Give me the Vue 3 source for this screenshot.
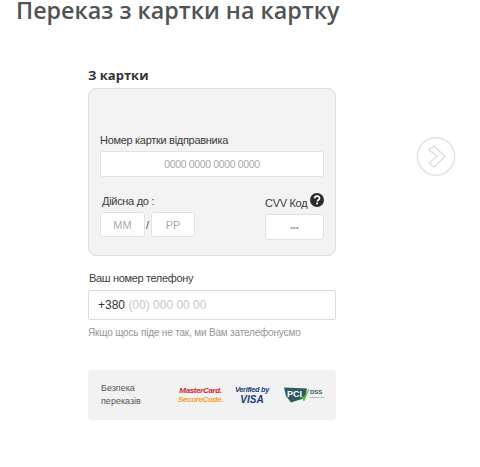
<script setup>
const title = 'Переказ з картки на картку';
</script>

<template>
  <div class="page">
    <h1 class="title">{{ title }}</h1>
    <div class="row">
      <div class="form">
        <h2 class="from">З картки</h2>
        <div class="panel">
          <label class="label">Номер картки відправника</label>
          <div class="box number">0000 0000 0000 0000</div>
          <div class="bottom">
            <div class="expiry">
              <label class="label expiry-label">Дійсна до :</label>
              <div class="dates">
                <div class="box mm">ММ</div>
                <span class="slash">/</span>
                <div class="box pp">РР</div>
              </div>
            </div>
            <div class="cvv">
              <div class="cvv-head">
                <span class="cvv-text">CVV Код</span>
                <svg class="help" viewBox="0 0 14 14" width="14" height="14">
                  <circle cx="7" cy="7" r="7" fill="#2b2b2b" />
                  <path d="M4.6 5.4C4.7 3.9 5.7 3.2 7.1 3.2c1.4 0 2.4.8 2.4 2 0 1-.6 1.4-1.2 1.8-.5.3-.7.6-.7 1.2V8.500" fill="none" stroke="#fff" stroke-width="1.700" />
                  <rect x="6.200" y="9.500" width="1.800" height="1.800" fill="#fff" />
                </svg>
              </div>
              <div class="box code">•••</div>
            </div>
          </div>
        </div>

        <label class="label phone-label">Ваш номер телефону</label>
        <div class="phone"><span class="prefix">+380</span> <span class="mask">(00) 000 00 00</span></div>
        <p class="hint">Якщо щось піде не так, ми Вам зателефонуємо</p>

        <div class="secure">
          <div class="secure-text">Безпека<br />переказів</div>
          <div class="logo mc">
            <span class="mc-top">MasterCard.</span>
            <span class="mc-bottom">SecureCode.</span>
          </div>
          <div class="logo visa">
            <span class="visa-top">Verified by</span>
            <span class="visa-bottom">VISA</span>
          </div>
          <div class="logo pci">
            <svg viewBox="0 0 40 16" width="40" height="16">
              <path d="M0 0.500 23 1.500 21 11 7 15.500 2 9z" fill="#2f5a5f" />
              <path d="M17 9.500l3 4.500 5-12-5 8z" fill="#57b947" stroke="#57b947" stroke-width="0.600" />
            </svg>
            <span class="pci-word">PCI</span>
            <span class="dss">DSS<small>COMPLIANT</small></span>
          </div>
        </div>
      </div>

      <div class="next">
        <svg viewBox="0 0 40 40" width="40" height="40">
          <circle cx="20" cy="19.500" r="18.700" fill="#fff" stroke="#e2e2e2" stroke-width="1.500" />
          <path d="M18 9 29 19.500 18 30 13 26 21 19.500 13 13z" fill="none" stroke="#dcdcdc" stroke-width="1.300" stroke-linejoin="round" />
        </svg>
      </div>
    </div>
  </div>
</template>

<style scoped>
.page {
  width: 480px;
  height: 467px;
  overflow: hidden;
  background: #fff;
  font-family: "Liberation Sans", Arial, sans-serif;
  color: #333;
}

.title {
  margin: 0 0 0 16px;
  font-family: "Open Sans", sans-serif;
  font-size: 23.300px;
  line-height: 21px;
  font-weight: 600;
  color: #4f5456;
  white-space: nowrap;
}

.row {
  display: flex;
  margin: 45px 0 0 88px;
}

.form {
  width: 248px;
}

.from {
  margin: 0 0 4px;
  font-family: "Open Sans", sans-serif;
  font-size: 13px;
  line-height: 18px;
  font-weight: 700;
  color: #333;
}

.panel {
  box-sizing: border-box;
  height: 168px;
  padding: 44px 11px 0;
  background: #f3f3f3;
  border: 1px solid #dedede;
  border-radius: 8px;
}

.label {
  display: block;
  font-size: 11px;
  line-height: 14px;
  letter-spacing: -0.300px;
  color: #3b3b3b;
}

.box {
  box-sizing: border-box;
  display: flex;
  align-items: center;
  justify-content: center;
  background: #fff;
  border: 1px solid #e2e2e2;
  border-radius: 3px;
  font-size: 11px;
  color: #a9a9a9;
}

.number {
  height: 26px;
  margin-top: 4px;
  font-size: 10.500px;
  letter-spacing: -0.350px;
}

.bottom {
  display: flex;
  justify-content: space-between;
  margin-top: 17px;
}

.expiry-label {
  margin-left: 2px;
}

.dates {
  display: flex;
  align-items: center;
  margin-top: 4px;
}

.mm {
  width: 45px;
  height: 25px;
}

.pp {
  width: 44px;
  height: 25px;
}

.slash {
  width: 5px;
  margin-left: 1px;
  font-size: 11px;
  color: #555;
}

.cvv {
  width: 59px;
  margin-top: -1px;
}

.cvv-head {
  display: flex;
  align-items: center;
  justify-content: space-between;
  height: 14px;
  width: 59px;
}

.cvv-text {
  margin-top: 6px;
  font-size: 11px;
  line-height: 14px;
  letter-spacing: -0.300px;
  color: #3b3b3b;
  white-space: nowrap;
}

.code {
  height: 26px;
  margin-top: 7px;
  font-size: 8px;
  color: #999;
}

.phone-label {
  margin: 15px 0 0 1px;
  letter-spacing: -0.350px;
}

.phone {
  box-sizing: border-box;
  height: 30px;
  margin-top: 5px;
  padding-left: 9px;
  border: 1px solid #dcdcdc;
  border-radius: 2px;
  font-size: 12px;
  line-height: 28px;
  white-space: nowrap;
}

.prefix {
  color: #333;
}

.mask {
  color: #c8c8c8;
}

.hint {
  margin: 6px 0 0;
  font-size: 10px;
  line-height: 14px;
  letter-spacing: -0.180px;
  color: #8f979b;
  white-space: nowrap;
}

.secure {
  display: flex;
  align-items: center;
  height: 50px;
  margin-top: 30px;
  padding-left: 13px;
  background: #f2f2f2;
  border-radius: 4px;
}

.secure-text {
  width: 79px;
  font-size: 9px;
  line-height: 13px;
  color: #555;
}

.logo {
  display: flex;
  flex-direction: column;
  align-items: center;
}

.mc {
  width: 41px;
  font-size: 8px;
  font-weight: 700;
  font-style: italic;
  line-height: 9.500px;
  letter-spacing: -0.350px;
  white-space: nowrap;
}

.mc-top {
  color: #d8232a;
}

.mc-bottom {
  color: #f7a11a;
}

.visa {
  width: 34px;
  margin-left: 14px;
  color: #1a3d7c;
  font-weight: 700;
  font-style: italic;
  white-space: nowrap;
}

.visa-top {
  font-size: 7.500px;
  line-height: 9px;
  letter-spacing: -0.350px;
}

.visa-bottom {
  font-size: 10px;
  line-height: 11.500px;
}

.pci {
  position: relative;
  width: 40px;
  height: 16px;
  margin-left: 15px;
}

.pci svg {
  display: block;
}

.pci-word {
  position: absolute;
  left: 3px;
  top: 2px;
  font-size: 9px;
  font-weight: 700;
  line-height: 10px;
  color: #fff;
}

.dss {
  position: absolute;
  left: 26px;
  top: 2px;
  display: flex;
  flex-direction: column;
  font-size: 6px;
  font-weight: 700;
  line-height: 7px;
  color: #2f5a5f;
}

.dss small {
  font-size: 2.500px;
  line-height: 3px;
  font-weight: 400;
}

.next {
  margin: 71px 0 0 80px;
}

.next svg {
  display: block;
}
</style>
